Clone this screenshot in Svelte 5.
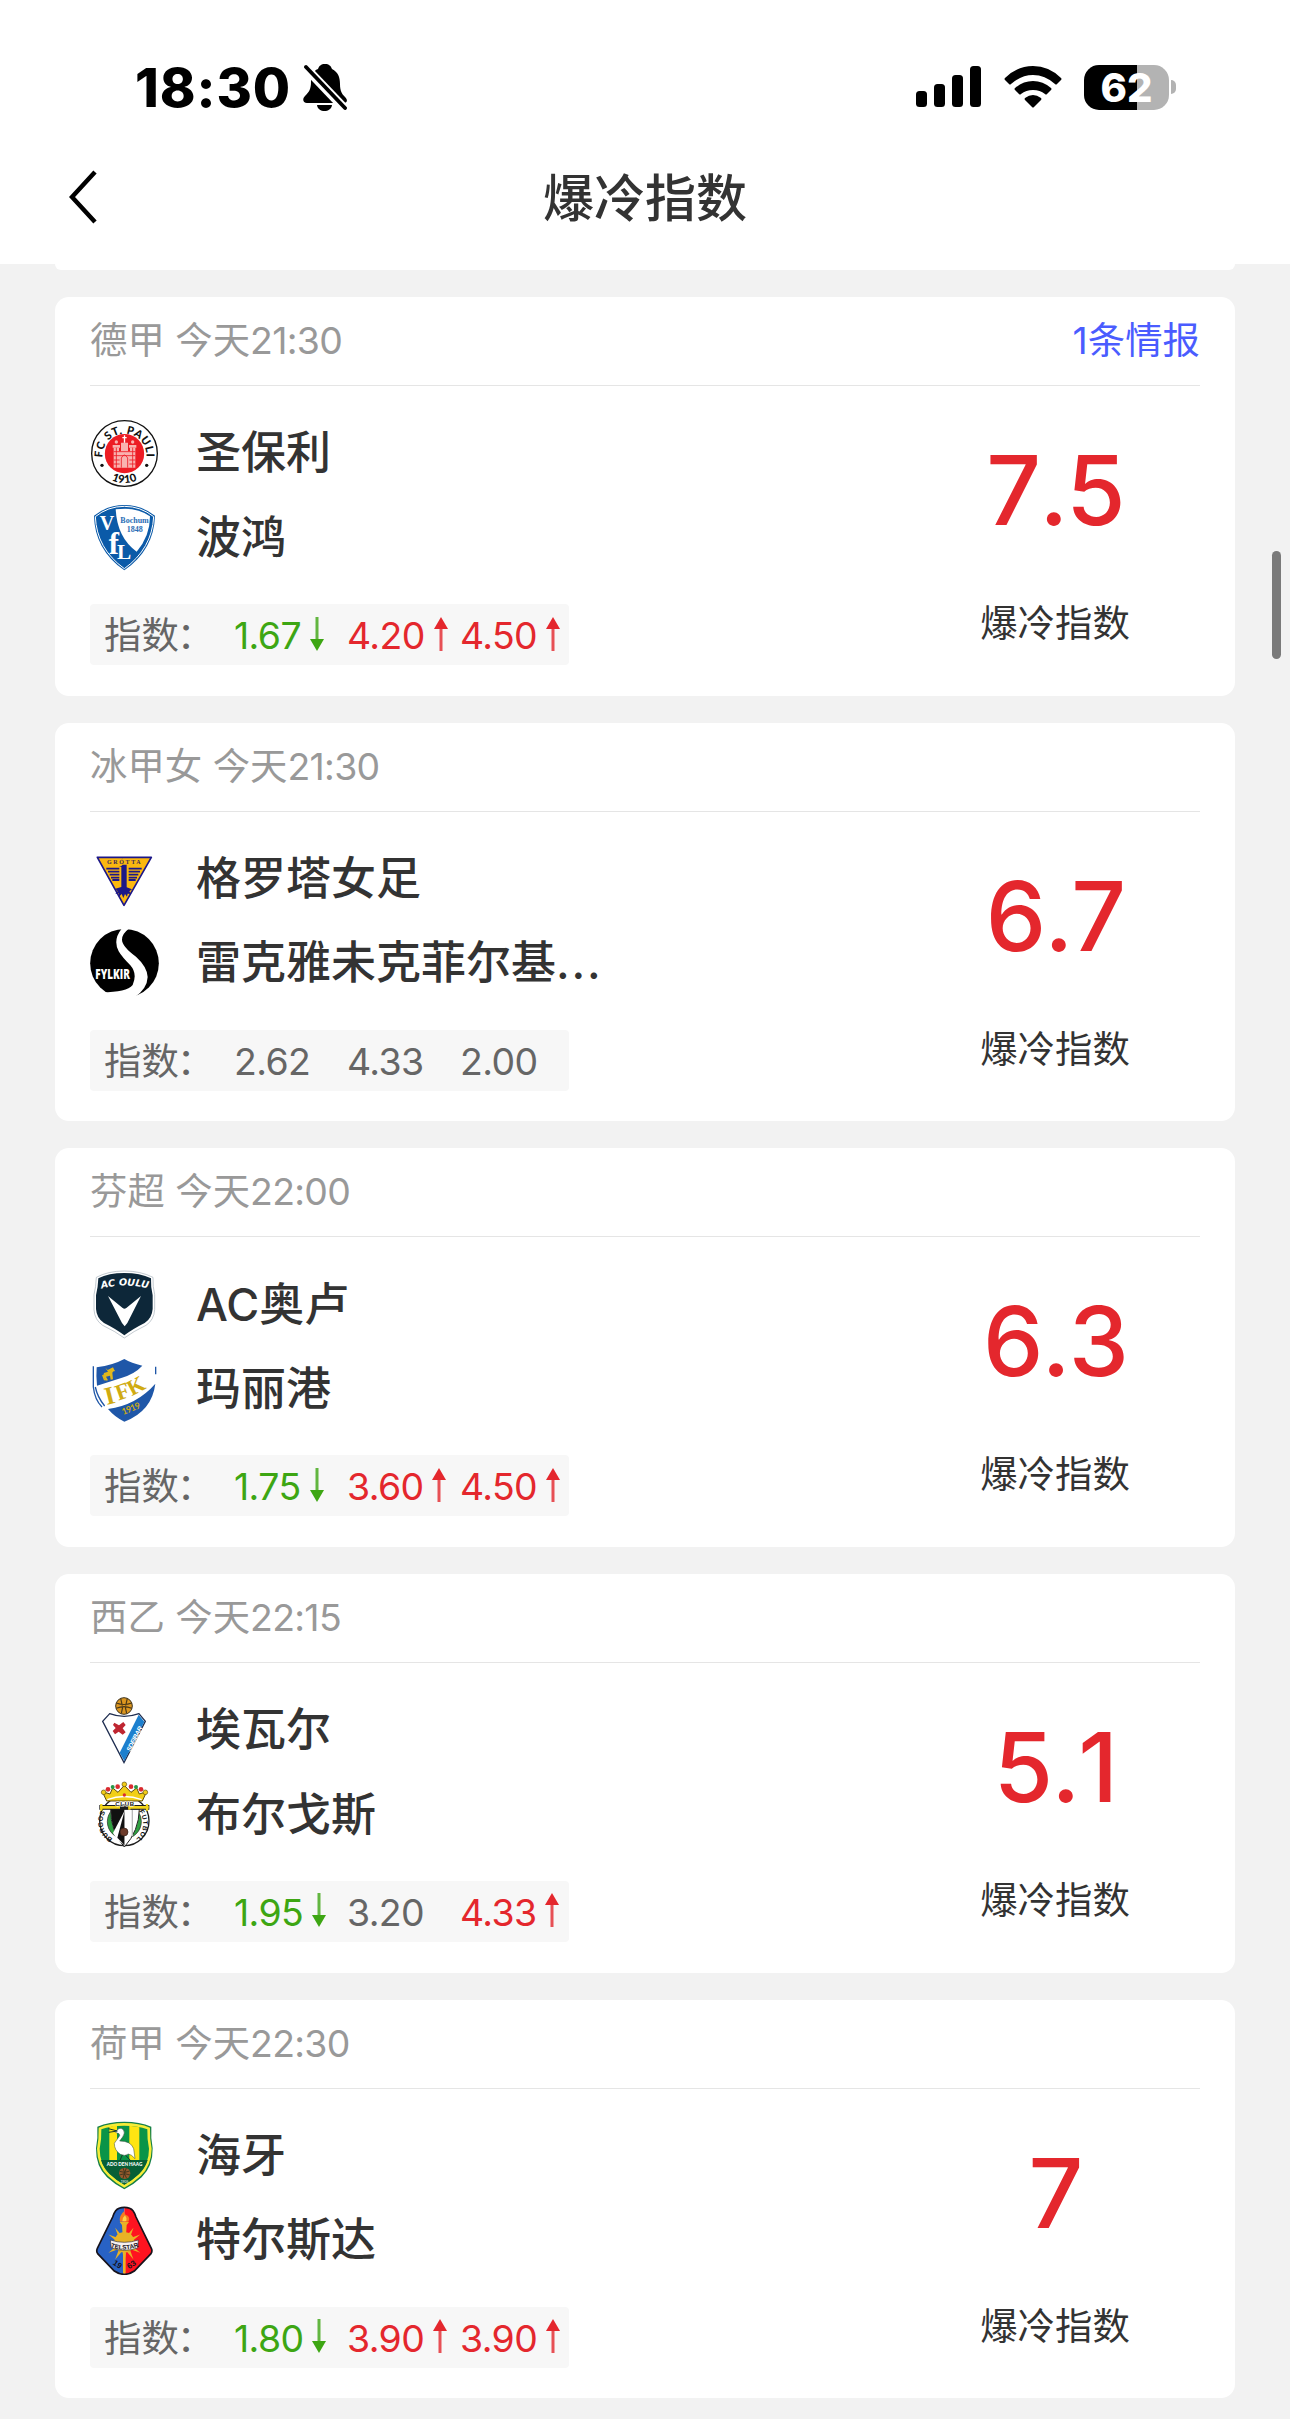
<script>
    const matches = [
        {
            league: "德甲",
            time: "21:30",
            intel: 1,
            home: { name: "圣保利", crest: "pauli", box: "30 27 207 207" },
            away: { name: "波鸿", crest: "bochum", box: "30 280 207 207" },
            odds: [
                { value: "1.67", trend: "down" },
                { value: "4.20", trend: "up" },
                { value: "4.50", trend: "up" },
            ],
            score: "7.5",
        },
        {
            league: "冰甲女",
            time: "21:30",
            intel: 0,
            home: { name: "格罗塔女足", crest: "grotta", box: "30 29 207 207" },
            away: { name: "雷克雅未克菲尔基尔女足", crest: "fylkir", box: "30 282 207 207" },
            odds: [{ value: "2.62" }, { value: "4.33" }, { value: "2.00" }],
            score: "6.7",
        },
        {
            league: "芬超",
            time: "22:00",
            intel: 0,
            home: { name: "AC奥卢", crest: "oulu", box: "30 31 207 207" },
            away: { name: "玛丽港", crest: "ifk", box: "30 284 207 207" },
            odds: [
                { value: "1.75", trend: "down" },
                { value: "3.60", trend: "up" },
                { value: "4.50", trend: "up" },
            ],
            score: "6.3",
        },
        {
            league: "西乙",
            time: "22:15",
            intel: 0,
            home: { name: "埃瓦尔", crest: "eibar", box: "30 32 207 207" },
            away: { name: "布尔戈斯", crest: "burgos", box: "30 285 207 207" },
            odds: [
                { value: "1.95", trend: "down" },
                { value: "3.20" },
                { value: "4.33", trend: "up" },
            ],
            score: "5.1",
        },
        {
            league: "荷甲",
            time: "22:30",
            intel: 0,
            home: { name: "海牙", crest: "haag", box: "30 34 207 207" },
            away: { name: "特尔斯达", crest: "telstar", box: "30 287 207 207" },
            odds: [
                { value: "1.80", trend: "down" },
                { value: "3.90", trend: "up" },
                { value: "3.90", trend: "up" },
            ],
            score: "7",
        },
    ];

    const maxName = 8;
    const rays = [-150, -120, -60, -30, 30, 60, 90, 120, 150];
</script>

{#snippet crest(name, box)}
    <svg class="crest" viewBox={box} aria-hidden="true">
        {#if name === "pauli"}
            <defs>
                <path id="pauli-top" d="M67.500 137A66 66 0 1 1 199.500 137" />
                <path id="pauli-bottom" d="M45.500 131a88 88 0 0 0 176 0" />
            </defs>
            <circle cx="133.500" cy="130.500" r="98.500" fill="#fff" stroke="#111" stroke-width="4" />
            <circle cx="133.500" cy="131" r="59" fill="#ed1c24" />
            <g fill="#f9b3b0">
                <path d="M101 113h16v60h-16zM150 113h16v60h-16zM123 98h21v28h-21zM117 124h33v49h-33z" />
                <circle cx="109" cy="96" r="5" />
                <circle cx="158" cy="96" r="5" />
                <path d="M98 105h22v8H98zM147 105h22v8h-22z" />
            </g>
            <path d="M133.500 76v22M127 83h13" stroke="#fff" stroke-width="4" />
            <path d="M124 173v-29q9-18 19 0v29M101 125h65M101 137h65M101 150h18M148 150h18M101 162h18M148 162h18M109 113v60M158 113v60" fill="none" stroke="#ed1c24" stroke-width="2.500" />
            <g font-family="Lato, sans-serif" font-weight="900" fill="#111" text-anchor="middle">
                <text font-size="33" letter-spacing="2"><textPath href="#pauli-top" startOffset="50%">FC ST. PAULI</textPath></text>
                <text font-size="33" letter-spacing="1"><textPath href="#pauli-bottom" startOffset="50%">1910</textPath></text>
            </g>
            <circle cx="66" cy="166" r="5" fill="#111" />
            <circle cx="200" cy="166" r="5" fill="#111" />
        {:else if name === "bochum"}
            <path d="M42 318Q82 286 133 286Q184 286 225 318Q222 420 133 482Q44 420 42 318z" fill="#0b5aa8" />
            <path d="M46 321Q84 290 133 290Q182 290 221 321Q216 417 133 477Q50 417 46 321z" fill="none" stroke="#fff" stroke-width="3" />
            <path d="M107 299Q170 290 210 320Q210 380 170 426Q112 385 107 299z" fill="#fff" />
            <g font-family="Liberation Serif, serif" font-weight="bold">
                <text font-size="60" fill="#fff"><tspan x="59" y="360">V</tspan><tspan x="86" y="432" font-size="92">f</tspan><tspan x="111" y="447" font-size="64">L</tspan></text>
                <text font-size="24" fill="#2a6db5"><tspan x="121" y="340">Bochum</tspan><tspan x="140" y="367">1848</tspan></text>
            </g>
        {:else if name === "grotta"}
            <path d="M52 69h162l-82 144z" fill="#fbb80f" stroke="#1c1788" stroke-width="5" stroke-linejoin="round" />
            <text x="81" y="90" font-family="Liberation Serif, serif" font-weight="bold" font-size="18" fill="#3a2a55" textLength="101">GRÓTTA</text>
            <path d="M79 103h39M84 112h34M89 121h29M93 130h25M97 137h21M146 103h39M146 112h34M146 121h29M146 130h25M146 137h21" stroke="#1c1788" stroke-width="5.500" />
            <path d="M123 96l5-5h12v68l16 6-8 6 6 8-11-1-2 9-6-8-5 12-5-12-8 8 0-10-11 2 7-8-7-8 18-5v-60h-7z" fill="#1c1788" />
        {:else if name === "fylkir"}
            <circle cx="133.500" cy="385" r="103" fill="#000" />
            <path d="M125 281Q98 315 116 349Q126 366 151 391Q173 416 158 450Q140 472 66 472L80 490H160Q202 462 203 426Q202 396 168 365Q126 334 126 314Q126 296 147 281z" fill="#fff" />
            <text x="46" y="431" font-family="Open Sans, sans-serif" font-weight="800" font-size="40" fill="#fff" textLength="104" lengthAdjust="spacingAndGlyphs">FYLKIR</text>
        {:else if name === "oulu"}
            <path d="M133 34Q182 34 219 53Q218 82 224 105V150Q222 181 198 197Q160 215 133 235Q106 215 68 197Q44 181 42 150V105Q48 82 49 53Q84 34 133 34z" fill="#fff" stroke="#8795a0" stroke-width="1.500" />
            <path d="M133 40Q180 40 213 56Q212 82 218 107V148Q216 176 194 190Q158 208 133 227Q108 208 72 190Q50 176 48 148V107Q54 82 55 56Q86 40 133 40z" fill="#0d2739" />
            <path d="M84 109L128 145Q133 150 139 145L183 109L142 190L134 200L126 190z" fill="#fff" />
            <path id="oulu-arc" d="M60 88Q133 67 209 88" fill="none" />
            <text font-family="DejaVu Sans, sans-serif" font-weight="bold" font-style="italic" font-size="29" fill="#fff" text-anchor="middle"><textPath href="#oulu-arc" startOffset="50%">AC OULU</textPath></text>
        {:else if name === "ifk"}
            <path d="M39 317Q98 310 133 291Q168 310 227 317V380Q222 450 133 486Q44 450 39 380z" fill="#fff" />
            <path d="M50 321Q100 314 133 296Q154 308 187 316Q165 340 126 352L51 376Q48 345 50 321z" fill="#1f57a8" />
            <path d="M226 370Q216 452 133 484Q104 470 84 446Q170 434 226 370z" fill="#1f57a8" />
            <path d="M40 318V380Q44 418 66 440M227 319V342M46 380Q52 410 74 437" fill="none" stroke="#1f57a8" stroke-width="4" />
            <g font-family="Liberation Serif, serif" font-weight="bold" fill="#d0ab12">
                <text transform="rotate(-14 94 430)" x="80" y="431" font-size="76">I</text>
                <text transform="rotate(-20 128 420)" x="116" y="417" font-size="68">F</text>
                <text transform="rotate(-28 170 400)" x="153" y="400" font-size="66">K</text>
                <text transform="rotate(-22 130 463)" x="129" y="464" font-family="Lato, sans-serif" font-size="27" textLength="58">1919</text>
            </g>
            <path d="M76 322l7 7 16-8 4 8-6 8 2 20-7 1-2-12-12 3 6 11-7 1-8-14 3-9 12-4z" fill="#e0b71b" />
            <path d="M68 344l6 16M94 331h10" stroke="#e0b71b" stroke-width="4" />
        {:else if name === "eibar"}
            <circle cx="132" cy="62" r="25" fill="#dc961f" stroke="#3b3321" stroke-width="3" />
            <path d="M109 53q23 9 46 0M109 69q23-10 46 0M122 39l5 22M142 39l-5 22M124 84l4-18M140 84l-4-18" fill="none" stroke="#4a3818" stroke-width="3.500" />
            <path d="M89 85Q132 101 177 85L196 108L132 232L68 108z" fill="#fff" stroke="#1f2e51" stroke-width="4" />
            <path d="M176 88L193 109L133 227L119 202z" fill="#1c7fce" />
            <path d="M103 112l14 8 13-10 7 9-9 10 9 12-9 7-12-9-11 8-7-10 9-9-8-9z" fill="#bf2631" />
            <text transform="rotate(-63 143 193)" x="140" y="203" font-family="Liberation Sans, sans-serif" font-weight="bold" font-style="italic" font-size="20" fill="#fff" textLength="82">SDEIBAR</text>
        {:else if name === "burgos"}
            <defs>
                <path id="burgos-left" d="M98 461A59 59 0 0 1 83 371" />
                <path id="burgos-right" d="M177 379A61 61 0 0 1 159 469" />
            </defs>
            <circle cx="133" cy="408" r="74" fill="#fff" stroke="#1d1d1d" stroke-width="4" />
            <circle cx="133" cy="410" r="51" fill="#2fa040" stroke="#222" stroke-width="2" />
            <path d="M92 372H178Q177 438 133 486Q91 438 92 372z" fill="#fff" stroke="#222" stroke-width="3" />
            <path d="M93 372H133V484Q92 438 93 372z" fill="#111" />
            <path d="M133 379L99 444Q110 465 133 480z" fill="#fff" />
            <path d="M133 380V480L112 458z" fill="#111" />
            <path d="M157 374V454" stroke="#bbb" stroke-width="4" />
            <circle cx="132" cy="441" r="12" fill="#6c3b2a" stroke="#321f18" stroke-width="2" />
            <path d="M58 367H208" stroke="#1d1d1d" stroke-width="14" />
            <path d="M60 367H120M148 367H206" stroke="#f2d51d" stroke-width="8" />
            <path d="M64 357v20M201 357v20M148 360v14" stroke="#f2d51d" stroke-width="7" />
            <path d="M80 348L67 320L90 327L98 309L114 322L133 301L153 322L170 309L178 327L200 320L187 348z" fill="#f2cf17" stroke="#5d4b12" stroke-width="3" />
            <path d="M82 344Q133 325 185 344" fill="none" stroke="#fff" stroke-width="4" />
            <g fill="#f1cd17" stroke="#5d4b12" stroke-width="2">
                <circle cx="71" cy="322" r="7" />
                <circle cx="133" cy="298" r="7" />
                <circle cx="196" cy="322" r="7" />
            </g>
            <g fill="#d92b30">
                <circle cx="84" cy="313" r="7" />
                <circle cx="113" cy="305" r="7" />
                <circle cx="153" cy="305" r="7" />
                <circle cx="183" cy="313" r="7" />
                <circle cx="133" cy="330" r="5" />
            </g>
            <circle cx="98" cy="306" r="6" fill="#279747" />
            <circle cx="168" cy="306" r="6" fill="#279747" />
            <g font-family="Liberation Sans, sans-serif" font-weight="bold" fill="#111">
                <text x="106" y="362" font-size="18" stroke="#fff" stroke-width="3" paint-order="stroke" textLength="56">CLUB</text>
                <text font-size="20"><textPath href="#burgos-left" textLength="92">BURGOS</textPath></text>
                <text font-size="20"><textPath href="#burgos-right" textLength="92">FUTBOL</textPath></text>
            </g>
        {:else if name === "haag"}
            <path d="M133 36Q179 36 214 51Q212 86 218 116Q219 170 185 203Q160 226 133 239Q106 226 81 203Q47 170 48 116Q54 86 52 51Q87 36 133 36z" fill="#168047" />
            <path d="M133 40Q177 40 210 54Q209 87 215 117Q214 168 182 199Q158 221 133 234Q108 221 84 199Q52 168 51 117Q57 87 56 54Q89 40 133 40z" fill="#f7ec38" />
            <path d="M133 48Q174 48 202 59Q201 87 207 117Q207 164 177 193Q156 213 133 225Q110 213 89 193Q59 164 59 117Q65 87 64 59Q92 48 133 48z" fill="#0a9448" />
            <path d="M88 52Q101 48 111 48V151H88zM148 48Q166 50 178 53V151H148z" fill="#ffe512" />
            <path d="M63 151H203Q196 174 177 193Q156 213 133 225Q110 213 89 193Q70 174 63 151z" fill="#075f36" />
            <path d="M102 65L111 62Q119 51 130 60Q137 69 128 82L119 94Q153 94 161 117L165 147Q154 134 145 133Q136 141 121 134Q103 122 103 101L119 78Q119 70 111 70z" fill="#fff" stroke="#324838" stroke-width="1.500" />
            <path d="M85 57l27 7-26 4M127 136l-7 16M137 137l17 18" fill="none" stroke="#17372a" stroke-width="3" />
            <text x="80" y="169" font-family="Lato, sans-serif" font-weight="900" font-size="16" fill="#fff" textLength="107" lengthAdjust="spacingAndGlyphs">ADO DEN HAAG</text>
            <circle cx="134" cy="191" r="17" fill="#95592b" />
            <path d="M119 185q15 7 30-1M118 196q16-8 32 0M129 175l5 14 5-14M129 206l4-14 7 14" fill="none" stroke="#35301c" stroke-width="2.500" />
            <text x="122" y="219" font-family="Lato, sans-serif" font-size="10" fill="#fff">1905</text>
        {:else if name === "telstar"}
            <clipPath id="telstar-shape">
                <path d="M133 291Q151 291 159 301Q165 309 168 320L214 414Q218 422 213 430L163 482Q149 492 133 492Q117 492 103 482L53 430Q48 422 52 414L98 320Q101 309 107 301Q115 291 133 291z" />
            </clipPath>
            <g clip-path="url(#telstar-shape)">
                <path d="M40 285h93v210H40z" fill="#2862c5" />
                <path d="M133 285h93v210h-93z" fill="#ff1320" />
            </g>
            <path d="M133 291Q151 291 159 301Q165 309 168 320L214 414Q218 422 213 430L163 482Q149 492 133 492Q117 492 103 482L53 430Q48 422 52 414L98 320Q101 309 107 301Q115 291 133 291z" fill="none" stroke="#17131c" stroke-width="5" />
            <g fill="#e9b325">
                {#each rays as angle}
                    <path d="M160 395L188 400L160 405z" transform="rotate({angle} 133 400)" />
                {/each}
                <path d="M129 425h8v64h-8z" />
                <circle cx="133" cy="396" r="31" />
                <path d="M119 335h28l-7 9-2 33h-10l-2-33z" />
            </g>
            <path d="M120 334Q116 316 133 302Q131 313 143 316Q151 323 145 334z" fill="#f57c1d" />
            <path d="M127 333Q126 323 135 315Q142 323 139 333z" fill="#ffd34a" />
            <path id="telstar-arc" d="M93 411Q133 425 175 409" fill="none" />
            <path d="M91 389Q133 403 175 389L173 413Q133 427 94 413z" fill="#f7f0ee" stroke="#353239" stroke-width="2" />
            <g font-family="Liberation Sans, sans-serif" font-weight="bold" fill="#17131c" text-anchor="middle">
                <text font-size="19"><textPath href="#telstar-arc" startOffset="50%">TELSTAR</textPath></text>
                <text transform="rotate(35 112 463)" x="112" y="470" font-size="24">19</text>
                <text transform="rotate(-35 152 463)" x="154" y="472" font-size="24">63</text>
            </g>
        {/if}
    </svg>
{/snippet}

{#snippet team(item)}
    <div class="team">
        {@render crest(item.crest, item.box)}
        <span class="team-name">
            {item.name.slice(0, maxName)}{#if item.name.length > maxName}<span class="dots">...</span>{/if}
        </span>
    </div>
{/snippet}

<div class="page">
    <header class="top">
        <div class="status-bar">
            <div class="clock">
                <span>18:30</span>
                <svg width="44" height="48" viewBox="0 0 44 48">
                    <path d="M22 1c4 0 6 2 7 5 6 3 8 8 8 15 0 7 2 10 5 13 4 4 1 6-2 6H4c-4 0-5-4-2-7 4-4 6-7 6-14C8 12 10 8 15 6c1-3 3-5 7-5zM14 42h15c-1 8-14 8-15 0z" />
                    <path d="M2 4L42 46" stroke="#fff" stroke-width="9" />
                    <path d="M3 4L42 45" stroke="#000" stroke-width="3.800" stroke-linecap="round" />
                </svg>
            </div>
            <div class="indicators">
                <svg width="65" height="42" viewBox="0 0 65 42">
                    <rect x="0" y="25" width="11" height="16" rx="3.500" />
                    <rect x="18" y="18" width="11" height="23" rx="3.500" />
                    <rect x="36" y="9" width="11" height="32" rx="3.500" />
                    <rect x="54" y="0" width="11" height="41" rx="3.500" />
                </svg>
                <svg width="58" height="42" viewBox="0 0 58 42">
                    <path d="M1 12Q13 0 29 0T57 12Q58 13 57 14L53 18Q52 19 51 18Q41 9 29 9T7 18Q6 19 5 18L1 14Q0 13 1 12z" />
                    <path d="M11 22Q19 15 29 15T47 22Q48 23 47 24L43 28Q42 29 41 28Q36 24 29 24T17 28Q16 29 15 28L11 24Q10 23 11 22z" />
                    <path d="M21 32Q25 29 29 29T37 32Q38 33 37 34L30 41Q29 42 28 41L21 34Q20 33 21 32z" />
                </svg>
                <div class="battery">
                    <div class="battery-body">62</div>
                    <div class="battery-tip"></div>
                </div>
            </div>
        </div>
        <nav class="nav">
            <button class="back" type="button" aria-label="返回">
                <svg width="30" height="54" viewBox="0 0 30 54">
                    <path d="M26 2L3 27L26 52" fill="none" stroke="#000" stroke-width="4.500" />
                </svg>
            </button>
            <h1>爆冷指数</h1>
        </nav>
    </header>

    <main class="list">
        <div class="card-end"></div>
        {#each matches as match}
            <section class="card">
                <div class="card-head">
                    <span>{match.league} 今天<span class="time">{match.time}</span></span>
                    {#if match.intel}
                        <span class="intel">{match.intel}条情报</span>
                    {/if}
                </div>
                <div class="card-body">
                    <div class="info">
                        {@render team(match.home)}
                        {@render team(match.away)}
                        <div class="odds">
                            <span>指数<span class="colon">：</span></span>
                            {#each match.odds as odd}
                                <span class="odd {odd.trend ?? ''}">
                                    {odd.value}
                                    {#if odd.trend}
                                        <svg class="arrow" width="14" height="34" viewBox="0 0 14 34">
                                            <path d="M7 10V34" stroke="currentColor" stroke-width="3" opacity="0.800" />
                                            <path d="M7 0L14 12H0z" fill="currentColor" />
                                        </svg>
                                    {/if}
                                </span>
                            {/each}
                        </div>
                    </div>
                    <div class="rating">
                        <div class="score">{match.score}</div>
                        <div class="rating-label">爆冷指数</div>
                    </div>
                </div>
            </section>
        {/each}
    </main>
    <div class="scrollbar"></div>
</div>

<style>
    :global(body) {
        background: #f2f2f2;
    }

    .page {
        position: relative;
        width: 1290px;
        height: 2419px;
        overflow: hidden;
        background: #f2f2f2;
        color: #333;
        font-family: Inter, "Noto Sans CJK SC", sans-serif;
        font-size: 37.400px;
    }

    .top {
        height: 264px;
        background: #fff;
    }

    .status-bar {
        display: flex;
        justify-content: space-between;
        height: 132px;
        padding: 42px 114px 0 135px;
        box-sizing: border-box;
        color: #000;
    }

    .clock,
    .indicators {
        display: flex;
        align-items: center;
        height: 90px;
    }

    .clock {
        gap: 12px;
        font-size: 54px;
        font-weight: 800;
        letter-spacing: 0.900px;
        line-height: 90px;
    }

    .clock span {
        padding-top: 2px;
    }

    .indicators {
        gap: 22.500px;
    }

    .battery {
        display: flex;
        align-items: center;
        gap: 2px;
    }

    .battery-body {
        width: 85px;
        height: 45px;
        border-radius: 15px;
        background: linear-gradient(90deg, #000 62%, #b3b3b3 62%);
        color: #fff;
        font-size: 40px;
        font-weight: 800;
        line-height: 45px;
        text-align: center;
    }

    .battery-tip {
        width: 5px;
        height: 14px;
        border-radius: 0 5px 5px 0;
        background: #b3b3b3;
    }

    .nav {
        display: grid;
        grid-template-columns: 99px 1fr 99px;
        align-items: center;
        height: 130px;
    }

    .back {
        display: flex;
        justify-content: flex-end;
        padding: 0;
        border: none;
        background: none;
    }

    h1 {
        margin: 0;
        padding-top: 4px;
        font-size: 51px;
        font-weight: 500;
        line-height: 70px;
        text-align: center;
    }

    .list {
        padding: 0 55px;
    }

    .card-end {
        height: 6px;
        margin-bottom: 27px;
        overflow: hidden;
        border-radius: 0 0 12px 12px;
        background: #fff;
    }

    .card {
        height: 398.650px;
        margin-bottom: 27px;
        padding: 0 35px;
        box-sizing: border-box;
        border-radius: 14px;
        background: #fff;
    }

    .card-head {
        display: flex;
        justify-content: space-between;
        height: 88px;
        border-bottom: 1px solid #e5e5e5;
        color: #999;
        line-height: 88px;
    }

    .time {
        letter-spacing: -0.700px;
    }

    .intel {
        color: #4a5cff;
    }

    .card-body {
        display: flex;
        justify-content: space-between;
        padding-top: 25px;
    }

    .team {
        display: flex;
        align-items: center;
        gap: 37px;
        height: 84.500px;
    }

    .crest {
        width: 69px;
        height: 69px;
    }

    .team-name {
        font-size: 45px;
        font-weight: 500;
        line-height: 60px;
    }

    .dots {
        letter-spacing: 1.800px;
    }

    .odds {
        display: grid;
        grid-template-columns: 130px 113px 113px 1fr;
        align-items: center;
        width: 479px;
        height: 61px;
        margin-top: 24px;
        padding-left: 14px;
        box-sizing: border-box;
        border-radius: 4px;
        background: #f7f7f7;
        color: #666;
        line-height: 63px;
    }

    .colon {
        margin-left: -2px;
    }

    .odd {
        display: flex;
        align-items: center;
        gap: 9px;
        letter-spacing: -0.600px;
        white-space: nowrap;
    }

    .up {
        color: #e4272d;
    }

    .down {
        color: #3da613;
    }

    .arrow {
        flex: none;
        margin-top: -4px;
    }

    .down .arrow {
        transform: rotate(180deg);
    }

    .rating {
        width: 290px;
        text-align: center;
    }

    .score {
        margin-top: 19px;
        color: #e4272d;
        font-size: 96px;
        font-weight: 550;
        font-kerning: none;
        letter-spacing: -2px;
        line-height: 120px;
    }

    .rating-label {
        margin-top: 44px;
        line-height: 60px;
    }

    .scrollbar {
        position: absolute;
        top: 551px;
        right: 9px;
        width: 9px;
        height: 108px;
        border-radius: 5px;
        background: #7a7a7a;
    }
</style>
